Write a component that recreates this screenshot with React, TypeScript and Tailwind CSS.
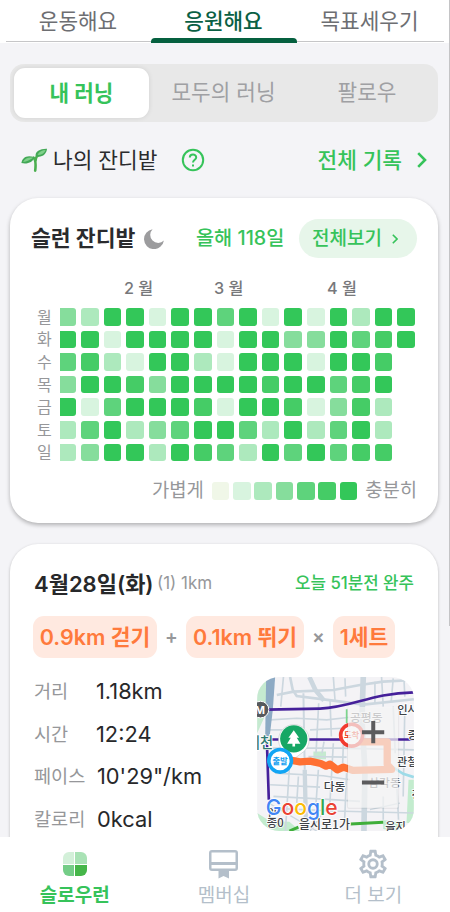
import React from 'react';
import { clsx } from 'clsx';

const LEVELS = [
  'bg-[#f0f7e8]',
  'bg-[#d8f4df]',
  'bg-[#ade9bd]',
  'bg-[#86dd9c]',
  'bg-[#5ed37c]',
  'bg-[#45cc66]',
  'bg-[#33c759]',
];

// one string per weekday, one digit per week
const GRASS = [
  { day: '월', cells: '3266166461616266' },
  { day: '화', cells: '6616666166336456' },
  { day: '수', cells: '452166216661665' },
  { day: '목', cells: '366536666566456' },
  { day: '금', cells: '614666516651352' },
  { day: '토', cells: '246234664262462' },
  { day: '일', cells: '236626542646455' },
];

const STATS = [
  { label: '거리', value: '1.18km', gap: 'w-[62px]' },
  { label: '시간', value: '12:24', gap: 'w-[62px]' },
  { label: '페이스', value: '10\'29"/km', gap: 'w-[63px]' },
  { label: '칼로리', value: '0kcal', gap: 'w-[63px]' },
];

const Sprout = () => (
  <svg viewBox="0 0 26 24" className="w-[26px] h-6">
    <path d="M14.2 22.6C15 16 15 12 12.6 9.6M14.6 13C14.4 10.5 15.4 8.4 17.6 7" fill="none" stroke="#4caf50" strokeWidth="2.6" strokeLinecap="round" />
    <path d="M.4 15C1 9.5 6 6.4 13.4 9.2C12 14.2 6 16.6.4 15Z" fill="#43a857" />
    <path d="M2 14C4 10.4 8 9 12 9.8C9 12 6 13.8 2 14Z" fill="#7fd08a" />
    <path d="M14.6 8C14 3.5 19 .6 26 .8C25.5 6.5 20 10.5 14.6 8Z" fill="#43a857" />
    <path d="M16.5 6.8C18 3.5 21.5 2 24.6 1.9C23.5 5 20.5 7.4 16.5 6.8Z" fill="#7fd08a" />
  </svg>
);

const RouteMap = () => (
  <svg viewBox="21 21 471 463" className="w-[157px] h-[154px] rounded-[22px] shrink-0">
    <rect x="21" y="21" width="471" height="463" fill="#f4f3f6" />
    <path d="M21 21H50L48 130L21 190Z M190 245H228V268H190Z" fill="#c5ead0" />
    <path d="M21 430L60 455L118 456L150 484H21Z M400 452L470 456L440 484L400 478Z M476 330H492V460H470Z" fill="#c3ecce" />

    {/* streets */}
    <g fill="none" stroke="#ccd7df" strokeWidth="5">
      <path d="M80 75L130 65L250 60L330 45L400 35L492 30M120 21L128 60L140 78L250 92L340 104L492 88" strokeWidth="8" />
      <path d="M178 21L196 60L222 92" strokeWidth="14" />
      <path d="M340 21L336 150L345 300L342 484" strokeWidth="17" />
      <path d="M160 70L164 300" strokeWidth="6" />
      <path d="M164 300L168 484" strokeWidth="13" />
      <path d="M206 100L198 250M240 90L244 200M100 21L92 110M118 290L106 484M222 215L216 250" />
      <path d="M250 21L255 90M285 25L287 80M395 21L400 110M430 25L424 95M462 21L465 80M375 35V100" />
      <path d="M60 150L140 145L230 150L300 142M56 180L120 180M180 180L280 175M60 235H270L492 240M75 310L220 318L300 330M60 345L210 352M70 380L220 388L330 395M60 415L250 424L492 430M175 260L290 262" />
      <path d="M250 220L246 290L238 430M280 225L278 280M205 300L198 400M145 320L140 400M290 310L284 450M430 110L436 250M465 110L460 380M400 380V450M440 330L446 450" />
      <path d="M56 400L200 484M180 484L240 400M360 420L450 400" strokeWidth="4" />
    </g>
    <path d="M48 21H75L68 120L58 205H45Z" fill="#8daac4" />
    <path d="M418 285L460 312L492 322" fill="none" stroke="#9edbe8" strokeWidth="8" />

    {/* subway lines */}
    <g fill="none" stroke="#45209a" strokeWidth="8">
      <path d="M50 119L210 116C310 112 360 70 492 67" />
      <path d="M50 209H492M50 209L56 390" />
    </g>
    <path d="M302 463L400 458M118 484L145 472" fill="none" stroke="#3fae3a" strokeWidth="9" />
    <path d="M290 118V160" stroke="#7bd68c" strokeWidth="5" />

    <g fontFamily="'Noto Sans CJK KR', sans-serif" fontWeight="500" fontSize="34" fill="#3e4247" stroke="#fff" strokeWidth="5" paintOrder="stroke">
      <text x="300" y="155" fontSize="35.500" fill="#5f6368">공평동</text>
      <text x="442" y="131">인사</text>
      <text x="474" y="208">종</text>
      <text x="441" y="289">관철</text>
      <text x="221" y="363" fontSize="35.500">다동</text>
      <text x="355" y="352" fontSize="35.500" fill="#5f6368">삼각동</text>
      <text x="147" y="479" fontSize="36">을지로1가</text>
      <text x="406" y="484">을지</text>
      <text x="485" y="388">경</text>
      <text x="50" y="442">인</text>
      <text x="50" y="473">종0</text>
      <text x="-10" y="234" fontSize="43" fill="#2f7a72">계천</text>
    </g>

    {/* station badge */}
    <circle cx="31" cy="119" r="25" fill="#56595e" stroke="#fff" strokeWidth="3" />
    <text x="14" y="131" fontSize="33" fontWeight="700" fontFamily="Inter" fill="#fff">M</text>

    {/* park pin */}
    <path d="M131 268L104 247A46 46 0 1 1 160 246Z" fill="#fff" stroke="#c9cccf" strokeWidth="2" />
    <circle cx="131" cy="207" r="41" fill="#16a765" />
    <path d="M131 181L147 204H140L151 222H135V230H127V222H111L122 204H115Z" fill="#fff" />

    {/* run */}
    <path d="M125 272L150 276L180 274L212 281L228 289L240 283L262 300L280 292L310 302L425 299L412 284V216H330" fill="none" stroke="#ff7033" strokeWidth="22" strokeLinejoin="round" strokeLinecap="round" />
    <circle cx="305" cy="196" r="33" fill="#fff" stroke="#f23b2f" strokeWidth="11" />
    <text x="305" y="205" textAnchor="middle" fontSize="25" fontWeight="700" fontFamily="'Noto Sans CJK KR', sans-serif" fill="#f2452c">도착</text>
    <circle cx="90" cy="273" r="34" fill="#fff" stroke="#12a5f4" strokeWidth="11" />
    <text x="90" y="282" textAnchor="middle" fontSize="25" fontWeight="700" fontFamily="'Noto Sans CJK KR', sans-serif" fill="#12a0f0">출발</text>

    {/* zoom buttons */}
    <rect x="291" y="112" width="157" height="306" rx="6" fill="#000" fillOpacity=".05" />
    <rect x="294" y="111" width="151" height="303" rx="4" fill="#fafafa" fillOpacity=".7" />
    <path d="M336 187H403M370 153V220M336 338H403" stroke="#5b5b5d" strokeWidth="12" />

    <text
      x="47"
      y="435"
      textLength="216"
      lengthAdjust="spacingAndGlyphs"
      fontFamily="Inter, sans-serif"
      fontWeight="500"
      fontSize="65"
      stroke="#fff"
      strokeWidth="5"
      paintOrder="stroke"
    >
      <tspan fill="#4285f4">G</tspan>
      <tspan fill="#ea4335">o</tspan>
      <tspan fill="#fbbc05">o</tspan>
      <tspan fill="#4285f4">g</tspan>
      <tspan fill="#34a853">l</tspan>
      <tspan fill="#ea4335">e</tspan>
    </text>
  </svg>
);

const TopTabs = () => (
  <div className="relative h-[43px] shrink-0 bg-white px-[6px]">
    <div className="h-[42px] border-b border-[#c6c6c8] grid grid-cols-[144px_147px_1fr] pr-[2px] text-center text-[21.300px] leading-[42px] text-[#6d6e72]">
      <span>운동해요</span>
      <span className="font-medium text-[#0a6044]">응원해요</span>
      <span>목표세우기</span>
    </div>
    <div className="absolute left-[151px] bottom-0 w-[146px] h-[5px] rounded-t-[4px] bg-[#05603f]" />
  </div>
);

const GrassCard = () => (
  <section className="h-[325px] shrink-0 rounded-[28px] bg-white shadow-[0_2px_4px_rgba(0,0,0,0.28)]">
    <div className="flex items-center pt-[21px] pl-[21px]">
      <h2 className="w-[108px] text-[21.600px] leading-[39px] font-bold text-[#2a2b2d]">슬런 잔디밭</h2>
      <svg viewBox="0 0 20 20" className="ml-[5px] w-5 h-5">
        <path d="M8.6.2A10 10 0 1 0 19.9 11.6A7.6 7.6 0 0 1 8.6.2Z" fill="#9c9c9e" />
      </svg>
      <span className="ml-[32px] w-[90px] text-[19.700px] font-medium text-[#36c35a]">올해 118일</span>
      <button className="ml-[13px] flex h-[39px] w-[118px] items-center rounded-full bg-[#e7f6ea] pt-px pl-[13px] text-[19px] font-medium text-[#36c35a]">
        전체보기
        <svg viewBox="0 0 6 10" className="ml-[10px] w-[6px] h-[10px]" fill="none" stroke="currentColor" strokeWidth="1.6">
          <path d="M.8.8L5 5L.8 9.2" />
        </svg>
      </button>
    </div>

    <div className="mt-[19px] flex h-[22px] pl-[114px] text-[16.200px] leading-[22px] font-medium text-[#77787b] whitespace-pre">
      <span className="w-[90px]">2 월</span>
      <span className="w-[113px]">3 월</span>
      <span>4 월</span>
    </div>

    <div className="mt-[9px] flex flex-col gap-[5px] pl-[27px]">
      {GRASS.map((row) => (
        <div key={row.day} className="flex h-[17.600px] items-center">
          <span className="w-[23px] shrink-0 text-[16px] leading-none text-[#96979a]">{row.day}</span>
          <div className="flex gap-[5px]">
            {row.cells.split('').map((c, i) => (
              <i
                key={i}
                className={clsx('h-[17.600px] rounded-[3px]', i === 0 ? 'w-4 rounded-l-none' : 'w-[17.600px]', LEVELS[Number(c)])}
              />
            ))}
          </div>
        </div>
      ))}
    </div>

    <div className="mt-[18px] flex h-6 items-center justify-end pr-[21px] text-[18.800px] text-[#96979a]">
      <span className="mr-2">가볍게</span>
      <div className="flex gap-[3.700px]">
        {LEVELS.map((bg) => (
          <i key={bg} className={clsx('size-[17.600px] rounded-[3px]', bg)} />
        ))}
      </div>
      <span className="ml-[8px]">충분히</span>
    </div>
  </section>
);

const Pill = ({ children, width }: { children: React.ReactNode; width: string }) => (
  <span className={clsx('h-[42px] rounded-[11px] bg-[#ffe9e0] text-center text-[21.500px] leading-[42px] font-semibold text-[#ff7a3c]', width)}>
    {children}
  </span>
);

const RunCard = () => (
  <section className="mt-[21px] h-[340px] shrink-0 rounded-[28px] bg-white pl-[23px] pr-[24px] shadow-[0_1px_3px_rgba(0,0,0,0.25)]">
    <div className="flex h-[40px] items-center pt-[40px] pl-px">
      <h2 className="w-[119px] text-[22px] font-semibold text-[#27282a]">4월28일(화)</h2>
      <span className="ml-[4px] text-[17px] text-[#96979a]">(1) 1km</span>
      <span className="ml-auto text-[16.800px] font-medium text-[#36c35a]">오늘 51분전 완주</span>
    </div>
    <div className="mt-[32px] flex items-center">
      <Pill width="w-[124px]">0.9km 걷기</Pill>
      <span className="w-[29px] text-center text-[19px] font-semibold text-[#96979a]">+</span>
      <Pill width="w-[118px]">0.1km 뛰기</Pill>
      <span className="w-[29px] text-center text-[19px] font-semibold text-[#96979a]">×</span>
      <Pill width="w-[62px]">1세트</Pill>
    </div>
    <div className="mt-[19px] flex justify-between pl-px">
      <dl className="flex flex-col">
        {STATS.map((s) => (
          <div key={s.label} className="flex h-[42.500px] items-start text-[18.600px] leading-[28px]">
            <dt className={clsx('text-[#96979a]', s.gap)}>{s.label}</dt>
            <dd className="text-[21.800px] text-[#27282a]">{s.value}</dd>
          </div>
        ))}
      </dl>
      <RouteMap />
    </div>
  </section>
);

const BottomNav = () => (
  <nav className="grid h-[75px] shrink-0 grid-cols-3 bg-white pr-[2px] text-[19px] leading-[26px] text-[#b4bfca]">
    <div className="flex flex-col items-center pt-[15px] font-bold text-[#36c35a]">
      <div className="mb-[7px] grid grid-cols-2 gap-px size-6">
        <i className="rounded-tl-[6px] bg-[#d3f0d9]" />
        <i className="rounded-tr-[6px] bg-[#a9e2b5]" />
        <i className="rounded-bl-[6px] bg-[#74cd87]" />
        <i className="rounded-br-[6px] bg-[#45b649]" />
      </div>
      슬로우런
    </div>
    <div className="flex flex-col items-center pt-[12px]">
      <svg viewBox="0 0 29 30" className="mb-1 w-[29px] h-[30px]" fill="currentColor">
        <path d="M3 1H26Q29 1 29 4V19Q29 22 26 22H20V29.5L14.5 27L9.5 29.5V22H3Q0 22 0 19V4Q0 1 3 1ZM2.5 3.5V13H26.5V3.5ZM2.5 16V19.5H26.5V16Z" fillRule="evenodd" />
      </svg>
      멤버십
    </div>
    <div className="flex flex-col items-center pt-[10px]">
      <svg viewBox="0 0 24 24" className="mb-[2px] w-[34px] h-[34px]" fill="currentColor">
        <path d="M19.43 12.98c.04-.32.07-.64.07-.98s-.03-.66-.07-.98l2.11-1.65c.19-.15.24-.42.12-.64l-2-3.46a.5.5 0 0 0-.61-.22l-2.49 1c-.52-.4-1.08-.73-1.69-.98l-.38-2.65A.488.488 0 0 0 14 2h-4c-.25 0-.46.18-.49.42l-.38 2.65c-.61.25-1.17.59-1.69.98l-2.49-1a.5.5 0 0 0-.61.22l-2 3.46c-.13.22-.07.49.12.64l2.11 1.65c-.04.32-.07.65-.07.98s.03.66.07.98l-2.11 1.65c-.19.15-.24.42-.12.64l2 3.46c.12.22.39.3.61.22l2.49-1c.52.4 1.08.73 1.69.98l.38 2.65c.03.24.24.42.49.42h4c.25 0 .46-.18.49-.42l.38-2.65c.61-.25 1.17-.59 1.69-.98l2.49 1c.23.09.49 0 .61-.22l2-3.46c.12-.22.07-.49-.12-.64zm-1.98-1.71c.04.31.05.52.05.73s-.02.43-.05.73l-.14 1.13.89.7 1.08.84-.7 1.21-1.27-.51-1.04-.42-.9.68c-.43.32-.84.56-1.25.73l-1.06.43-.16 1.13-.2 1.35h-1.4l-.19-1.35-.16-1.13-1.06-.43c-.43-.18-.83-.41-1.23-.71l-.91-.7-1.06.43-1.27.51-.7-1.21 1.08-.84.89-.7-.14-1.13c-.03-.31-.05-.54-.05-.74s.02-.43.05-.73l.14-1.13-.89-.7-1.08-.84.7-1.21 1.27.51 1.04.42.9-.68c.43-.32.84-.56 1.25-.73l1.06-.43.16-1.13.2-1.35h1.39l.19 1.35.16 1.13 1.06.43c.43.18.83.41 1.23.71l.91.7 1.06-.43 1.27-.51.7 1.21-1.07.85-.89.7zM12 8a4 4 0 1 0 0 8 4 4 0 0 0 0-8m0 6a2 2 0 1 1 0-4 2 2 0 0 1 0 4" />
      </svg>
      더 보기
    </div>
  </nav>
);

export default function App() {
  return (
    <div className="relative flex h-[912px] w-[450px] flex-col overflow-hidden bg-[#f4f4f7] font-[Inter,'Noto_Sans_CJK_KR',sans-serif] whitespace-nowrap">
      <TopTabs />

      <main className="flex min-h-0 flex-1 flex-col overflow-hidden pl-[10px] pr-[12px]">
        <div className="mt-[21px] grid h-[58px] shrink-0 grid-cols-[135px_1fr_138px] items-center rounded-[14px] bg-[#e8e8e8] pl-[4px] pr-[2px] text-center text-[21.300px] text-[#9fa0a3]">
          <span className="h-[50px] rounded-[11px] bg-white leading-[51px] font-bold text-[#36c35a] shadow-[0_0_5px_rgba(0,0,0,0.1)]">내 러닝</span>
          <span>모두의 러닝</span>
          <span>팔로우</span>
        </div>

        <div className="flex h-[76px] shrink-0 items-center pl-[11px] pr-[11px] text-[21.400px] text-[#2a2b2d]">
          <Sprout />
          <span className="ml-[6px] w-[105px]">나의 잔디밭</span>
          <svg viewBox="0 0 24 24" className="ml-[23px] w-6 h-6" fill="none" stroke="#36c35a" strokeWidth="2">
            <circle cx="12" cy="12" r="10.2" />
            <path d="M8.8 9.6C8.8 5.4 15.2 5.4 15.2 9.4C15.2 11.6 12 11.9 12 14.5M12 16.4V18.4" />
          </svg>
          <span className="ml-auto font-medium text-[#36c35a]">전체 기록</span>
          <svg viewBox="0 0 10 16" className="ml-[15px] w-[10px] h-4" fill="none" stroke="#36c35a" strokeWidth="2.6">
            <path d="M1.2 1.2L8 8L1.2 14.8" />
          </svg>
        </div>

        <div className="-mx-[10px] flex flex-col px-[10px]">
          <GrassCard />
          <RunCard />
        </div>
      </main>

      <BottomNav />
      <div className="absolute right-0 top-0 h-[626px] w-px bg-[#c4c4c6]" />
    </div>
  );
}
